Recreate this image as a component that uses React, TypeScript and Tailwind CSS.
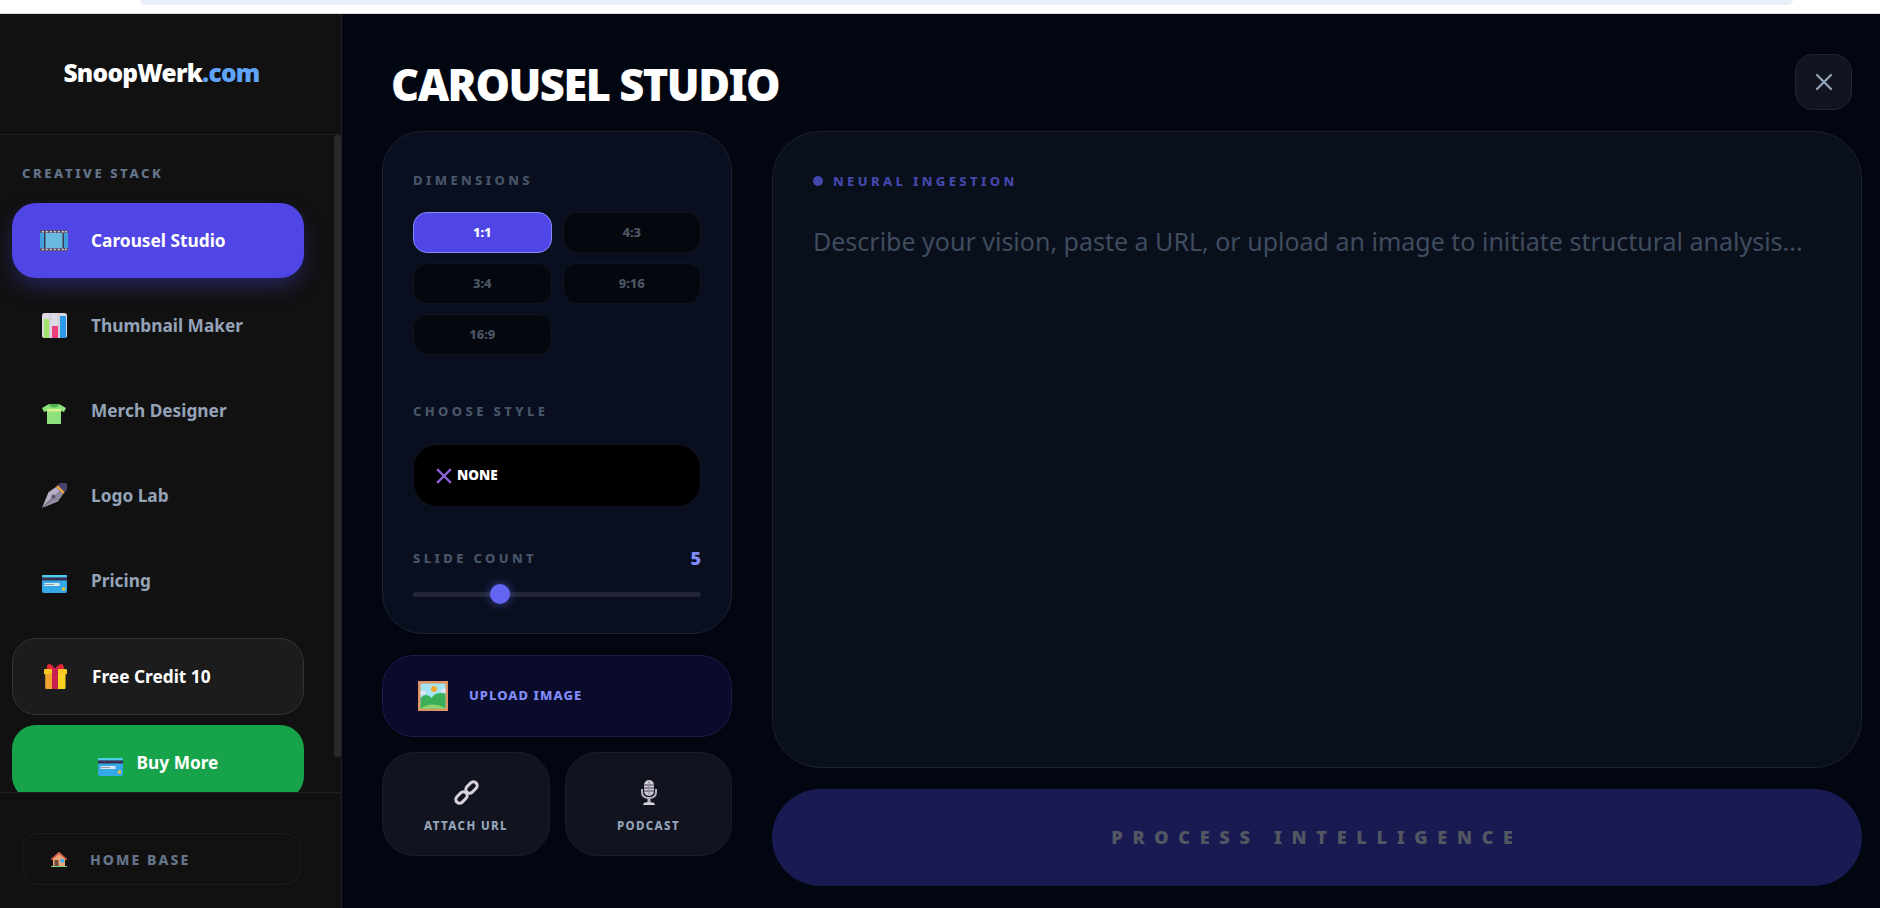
import { X } from "lucide-react";
import type { ReactNode } from "react";

const font = "font-['Noto_Sans','Open_Sans',sans-serif]";

function FilmIcon() {
  return (
    <svg width="28" height="21" viewBox="0 0 28 21">
      <rect width="28" height="21" rx="1" fill="#5b5470" />
      <rect x="0" y="3" width="28" height="15" fill="#3f9fd8" />
      <rect x="4" y="3" width="20" height="15" fill="#69b9e0" />
      <rect x="4" y="3" width="1.5" height="15" fill="#3d3a55" />
      <rect x="22.5" y="3" width="1.5" height="15" fill="#3d3a55" />
      {[2, 6, 10, 14, 18, 22, 25].map((x) => (
        <g key={x} fill="#e5e0ec">
          <rect x={x} y="1" width="1.6" height="1.4" />
          <rect x={x} y="18.7" width="1.6" height="1.4" />
        </g>
      ))}
    </svg>
  );
}

function ChartIcon() {
  return (
    <svg width="25" height="25" viewBox="0 0 25 25">
      <rect width="25" height="25" rx="2.5" fill="#dcd8e4" />
      <path d="M8 0v25M17 0v25" stroke="#c8c3d2" strokeWidth="0.8" />
      <rect x="2" y="6" width="5" height="19" fill="#a4e36a" />
      <rect x="10" y="13" width="6" height="12" fill="#ec3f7c" />
      <rect x="18" y="3" width="6" height="22" fill="#2b9be8" />
    </svg>
  );
}

function ShirtIcon() {
  return (
    <svg className="mt-[6px]" width="24" height="20" viewBox="0 0 24 20">
      <path d="M7 0l-7 4 2 4 3-1v13h14V7l3 1 2-4-7-4z" fill="#8ee27e" />
      <path d="M7 0h10l-1 2.5q-4 2-8 0z" fill="#4fb155" />
      <rect x="5" y="5" width="14" height="2.5" fill="#d8f08a" />
    </svg>
  );
}

function PenIcon() {
  return (
    <svg width="25" height="25" viewBox="0 0 25 25">
      <g transform="rotate(45 12.5 12.5)">
        <rect x="7.5" y="-4.5" width="10" height="8" rx="1.5" fill="#4a4370" />
        <rect x="7.5" y="3" width="10" height="2.5" fill="#f2a93f" />
        <path d="M7.5 5.5h10l1.5 9-6.5 15.5-6.5-15.5z" fill="#b6adc4" />
        <path d="M12.5 5.5h5l1.5 9-6.5 15.5z" fill="#8f879e" />
        <path d="M12.5 15v15" stroke="#5c5568" strokeWidth="0.8" />
        <circle cx="12.5" cy="14" r="2" fill="#5c5568" />
      </g>
    </svg>
  );
}

function CardIcon({ className }: { className?: string }) {
  return (
    <svg className={className} width="25" height="18" viewBox="0 0 25 18">
      <rect width="25" height="18" rx="2" fill="#35a9e8" />
      <rect width="25" height="2" y="0" rx="1" fill="#4fd0ea" />
      <rect y="2.5" width="25" height="3" fill="#3a3350" />
      <rect x="2.5" y="8" width="15" height="3" fill="#dbe6ee" />
      <rect x="3" y="9" width="9" height="0.8" fill="#7d8a96" />
      <rect x="20" y="12.5" width="3" height="3" fill="#f5c02e" />
    </svg>
  );
}

function GiftIcon() {
  return (
    <svg width="23" height="25" viewBox="0 0 23 25">
      <path d="M5 0q3 0 6 5 3-5 7-5 2 1 2 5H3q-1-4 2-5z" fill="#e3263c" />
      <rect y="5" width="23" height="5.5" rx="1" fill="#f9c623" />
      <rect x="1.5" y="10" width="20" height="15" rx="1" fill="#f8d420" />
      <rect x="1.5" y="10" width="7" height="15" rx="1" fill="#f0a232" />
      <rect x="8" y="4" width="6" height="21" fill="#c8214f" />
    </svg>
  );
}

function HouseIcon() {
  return (
    <svg width="16" height="15" viewBox="0 0 16 15">
      <path d="M8 0L0 7l1 1 1-.8V14h12V7.2l1 .8 1-1z" fill="#e8a678" />
      <path d="M8 0L0 7l1 1 7-6 7 6 1-1z" fill="#d9533b" />
      <rect x="3.5" y="8" width="4" height="6" fill="#6d4a3a" />
      <rect x="9.5" y="7" width="3.5" height="3.5" fill="#3fb2ee" />
      <rect y="14" width="16" height="1" fill="#72cc7c" />
    </svg>
  );
}

function PictureIcon() {
  return (
    <svg width="30" height="30" viewBox="0 0 30 30">
      <rect width="30" height="30" fill="#df9360" />
      <rect x="2.5" y="2.5" width="25" height="25" fill="#a5e2f2" />
      <circle cx="16" cy="8" r="3" fill="#f4a62b" />
      <path d="M2.5 10q4-1 6 2l-6 2zM22 10l5.5-3v5z" fill="#ece7f4" />
      <path d="M2.5 17q6-6 11 0 5-7 14-4v14.5h-25z" fill="#3dae58" />
      <path d="M2.5 27.5q12-8 25 0z" fill="#8ed36a" />
    </svg>
  );
}

function LinkIcon() {
  return (
    <svg width="25" height="25" viewBox="0 0 25 25" fill="none" stroke="#d8d0de" strokeWidth="3">
      <rect x="-6.5" y="-3.8" width="13" height="7.6" rx="3.8" transform="translate(7.5 17.5) rotate(-45)" />
      <rect x="-6.5" y="-3.8" width="13" height="7.6" rx="3.8" transform="translate(17.5 7.5) rotate(-45)" />
    </svg>
  );
}

function MicIcon() {
  return (
    <svg width="16" height="25" viewBox="0 0 16 25">
      <rect x="3" y="0" width="10" height="16" rx="5" fill="#cfc9d6" />
      <path d="M3 5h10M3 8h10M3 11h10" stroke="#453f52" strokeWidth="1" />
      <path d="M8 1v14" stroke="#8f8a9c" strokeWidth="1" />
      <path d="M1 9v3q0 6 7 6t7-6V9" fill="none" stroke="#b8b2c2" strokeWidth="2" />
      <rect x="6.5" y="18" width="3" height="4" fill="#b8b2c2" />
      <path d="M2 25q0-3 6-3t6 3z" fill="#d5d0dc" />
    </svg>
  );
}

function NavItem({ icon, label }: { icon: ReactNode; label: string }) {
  return (
    <div className="flex h-[75px] w-[292px] shrink-0 items-center pl-[28px] text-[17.3px] font-bold text-[#94a3b8]">
      <span className="mr-[23px] flex w-[28px] shrink-0 justify-center">{icon}</span>
      <span className="mt-[1px]">{label}</span>
    </div>
  );
}

function Ratio({ label, active }: { label: string; active?: boolean }) {
  return (
    <div
      className={
        active
          ? "flex h-[41px] items-center justify-center rounded-[14px] border border-[#818cf8] bg-[#4f46e5] text-[13px] font-extrabold text-white"
          : "flex h-[41px] items-center justify-center rounded-[14px] border border-[#12141c] bg-[#05070f] text-[13px] font-extrabold text-[#4b5563]"
      }
    >
      {label}
    </div>
  );
}

function SmallAction({ icon, label }: { icon: ReactNode; label: string }) {
  return (
    <div className="flex h-[104px] flex-col items-center rounded-[32px] border border-[#1b1e29] bg-[#11141e] pt-[27px]">
      {icon}
      <span className="mt-[12px] text-[11.5px] font-extrabold tracking-[0.12em] text-[#94a3b8]">{label}</span>
    </div>
  );
}

export default function App() {
  return (
    <div className={`${font} flex h-screen w-[1880px] flex-col overflow-hidden bg-white`}>
      <div className="h-[14px] shrink-0 border-b border-[#d9dbe0] bg-white">
        <div className="ml-[140px] mr-[87px] h-[5px] rounded-b-[12px] bg-[#e9eff9]" />
      </div>
      <div className="flex min-h-0 flex-1">
        <aside className="flex w-[342px] shrink-0 flex-col border-r border-[#1f2023] bg-[#111111]">
          <div className="flex h-[121px] shrink-0 items-center justify-center border-b border-[#1f2023] pb-[2px] pr-[18px] text-[24.5px] font-black tracking-[-0.03em] text-white">
            <span>
              SnoopWerk<span className="text-[#60a5fa]">.com</span>
            </span>
          </div>
          <div className="relative min-h-0 flex-1 overflow-hidden border-b border-[#1f2023]">
            <div className="absolute right-0 top-0 h-[622px] w-[7px] rounded-full bg-[#2a2a2a]" />
            <div className="pl-[12px] pt-[30px]">
              <div className="mb-[22px] pl-[10px] text-[13px] leading-[16px] font-extrabold tracking-[0.2em] text-[#64748b]">
                CREATIVE STACK
              </div>
              <div className="flex flex-col gap-[10px]">
                <div className="flex h-[75px] w-[292px] shrink-0 items-center rounded-[24px] bg-[#4f46e5] pl-[28px] text-[17.3px] font-bold text-white shadow-[0_10px_25px_-5px_rgba(79,70,229,0.45)]">
                  <span className="mr-[23px] flex w-[28px] shrink-0 justify-center">
                    <FilmIcon />
                  </span>
                  <span className="mt-[1px]">Carousel Studio</span>
                </div>
                <NavItem icon={<ChartIcon />} label="Thumbnail Maker" />
                <NavItem icon={<ShirtIcon />} label="Merch Designer" />
                <NavItem icon={<PenIcon />} label="Logo Lab" />
                <NavItem icon={<CardIcon className="mt-[7px]" />} label="Pricing" />
                <div className="mt-[10px] flex h-[77px] w-[292px] shrink-0 items-center rounded-[24px] border border-[#323232] bg-[#1c1c1c] pl-[31px] text-[17.3px] font-bold text-white">
                  <span className="flex w-[48px] shrink-0 justify-start">
                    <GiftIcon />
                  </span>
                  <span>Free Credit 10</span>
                </div>
                <div className="flex h-[75px] w-[292px] shrink-0 items-center justify-center gap-[14px] rounded-[24px] bg-[#16a34a] text-[17.3px] font-bold text-white">
                  <CardIcon className="mt-[8px]" />
                  <span>Buy More</span>
                </div>
              </div>
            </div>
          </div>
          <div className="h-[115px] shrink-0 pl-[22px] pt-[40px]">
            <div className="flex h-[52px] w-[279px] items-center rounded-[16px] border border-[#1c1c1e] pl-[28px] text-[14px] font-extrabold tracking-[0.15em] text-[#64748b]">
              <span className="w-[39px] shrink-0">
                <HouseIcon />
              </span>
              <span>HOME BASE</span>
            </div>
          </div>
        </aside>

        <main className="flex min-w-0 flex-1 flex-col bg-[#020611] pl-[40px] pr-[18px]">
          <div className="flex h-[117px] shrink-0 items-start justify-between">
            <h1 className="ml-[9px] mt-[43px] text-[43.4px] leading-[56px] font-black tracking-[-0.035em] text-white">
              CAROUSEL STUDIO
            </h1>
            <div className="mr-[10px] mt-[40px] flex h-[56px] w-[57px] items-center justify-center rounded-[18px] border border-[#232632] bg-[#12151f] text-[#94a3b8]">
              <X size={28} strokeWidth={2} />
            </div>
          </div>
          <div className="flex gap-[40px]">
            <div className="flex w-[350px] shrink-0 flex-col">
              <div className="h-[503px] rounded-[40px] border border-[#1d2130] bg-[#0a0f1f] px-[30px] pt-[40px]">
                <div className="text-[13px] leading-[16px] font-extrabold tracking-[0.26em] text-[#475569]">DIMENSIONS</div>
                <div className="mt-[24px] grid grid-cols-2 gap-x-[11px] gap-y-[10px]">
                  <Ratio label="1:1" active />
                  <Ratio label="4:3" />
                  <Ratio label="3:4" />
                  <Ratio label="9:16" />
                  <Ratio label="16:9" />
                </div>
                <div className="mt-[48px] text-[13px] leading-[16px] font-extrabold tracking-[0.26em] text-[#475569]">CHOOSE STYLE</div>
                <div className="mt-[25px] flex h-[63px] items-center gap-[5px] rounded-[24px] border border-[#12141c] bg-black pl-[22px] text-[13.5px] font-black text-white">
                  <svg width="16" height="16" viewBox="0 0 16 16" stroke="#8b63d8" strokeWidth="2.4" strokeLinecap="square">
                    <path d="M2 2l12 12M14 2L2 14" />
                  </svg>
                  <span>NONE</span>
                </div>
                <div className="mt-[41px] flex items-center justify-between">
                  <span className="text-[13px] leading-[16px] font-extrabold tracking-[0.26em] text-[#475569]">SLIDE COUNT</span>
                  <span className="text-[18px] leading-[20px] font-black text-[#818cf8]">5</span>
                </div>
                <div className="relative mt-[24px] h-[5px] rounded-full bg-[#232735]">
                  <div className="absolute left-[77px] top-[-8px] h-[20px] w-[20px] rounded-full bg-[#6366f1] shadow-[0_0_10px_rgba(99,102,241,0.6)]" />
                </div>
              </div>
              <div className="mt-[21px] flex h-[82px] items-center gap-[21px] rounded-[32px] border border-[#1c1b4b] bg-[#0a0b2a] pl-[35px]">
                <PictureIcon />
                <span className="text-[13px] font-extrabold tracking-[0.08em] text-[#818cf8]">UPLOAD IMAGE</span>
              </div>
              <div className="mt-[15px] grid grid-cols-[168px_167px] gap-[15px]">
                <SmallAction icon={<LinkIcon />} label="ATTACH URL" />
                <SmallAction icon={<MicIcon />} label="PODCAST" />
              </div>
            </div>
            <div className="flex min-w-0 flex-1 flex-col">
              <div className="h-[637px] rounded-[48px] border border-[#1d2130] bg-[#0a0f1c] pl-[40px] pt-[39px]">
                <div className="flex items-center gap-[10px]">
                  <span className="h-[10px] w-[10px] rounded-full bg-[#4348ab]" />
                  <span className="text-[13px] leading-[20px] font-extrabold tracking-[0.26em] text-[#4348ab]">NEURAL INGESTION</span>
                </div>
                <p className="mt-[32px] text-[25px] leading-[36px] text-[#3f4c5e]">
                  Describe your vision, paste a URL, or upload an image to initiate structural analysis...
                </p>
              </div>
              <div className="mt-[21px] flex h-[97px] items-center justify-center rounded-full bg-[#1a1a52] text-[18px] font-black tracking-[0.54em] text-[#525762]">
                PROCESS INTELLIGENCE
              </div>
            </div>
          </div>
        </main>
      </div>
    </div>
  );
}
